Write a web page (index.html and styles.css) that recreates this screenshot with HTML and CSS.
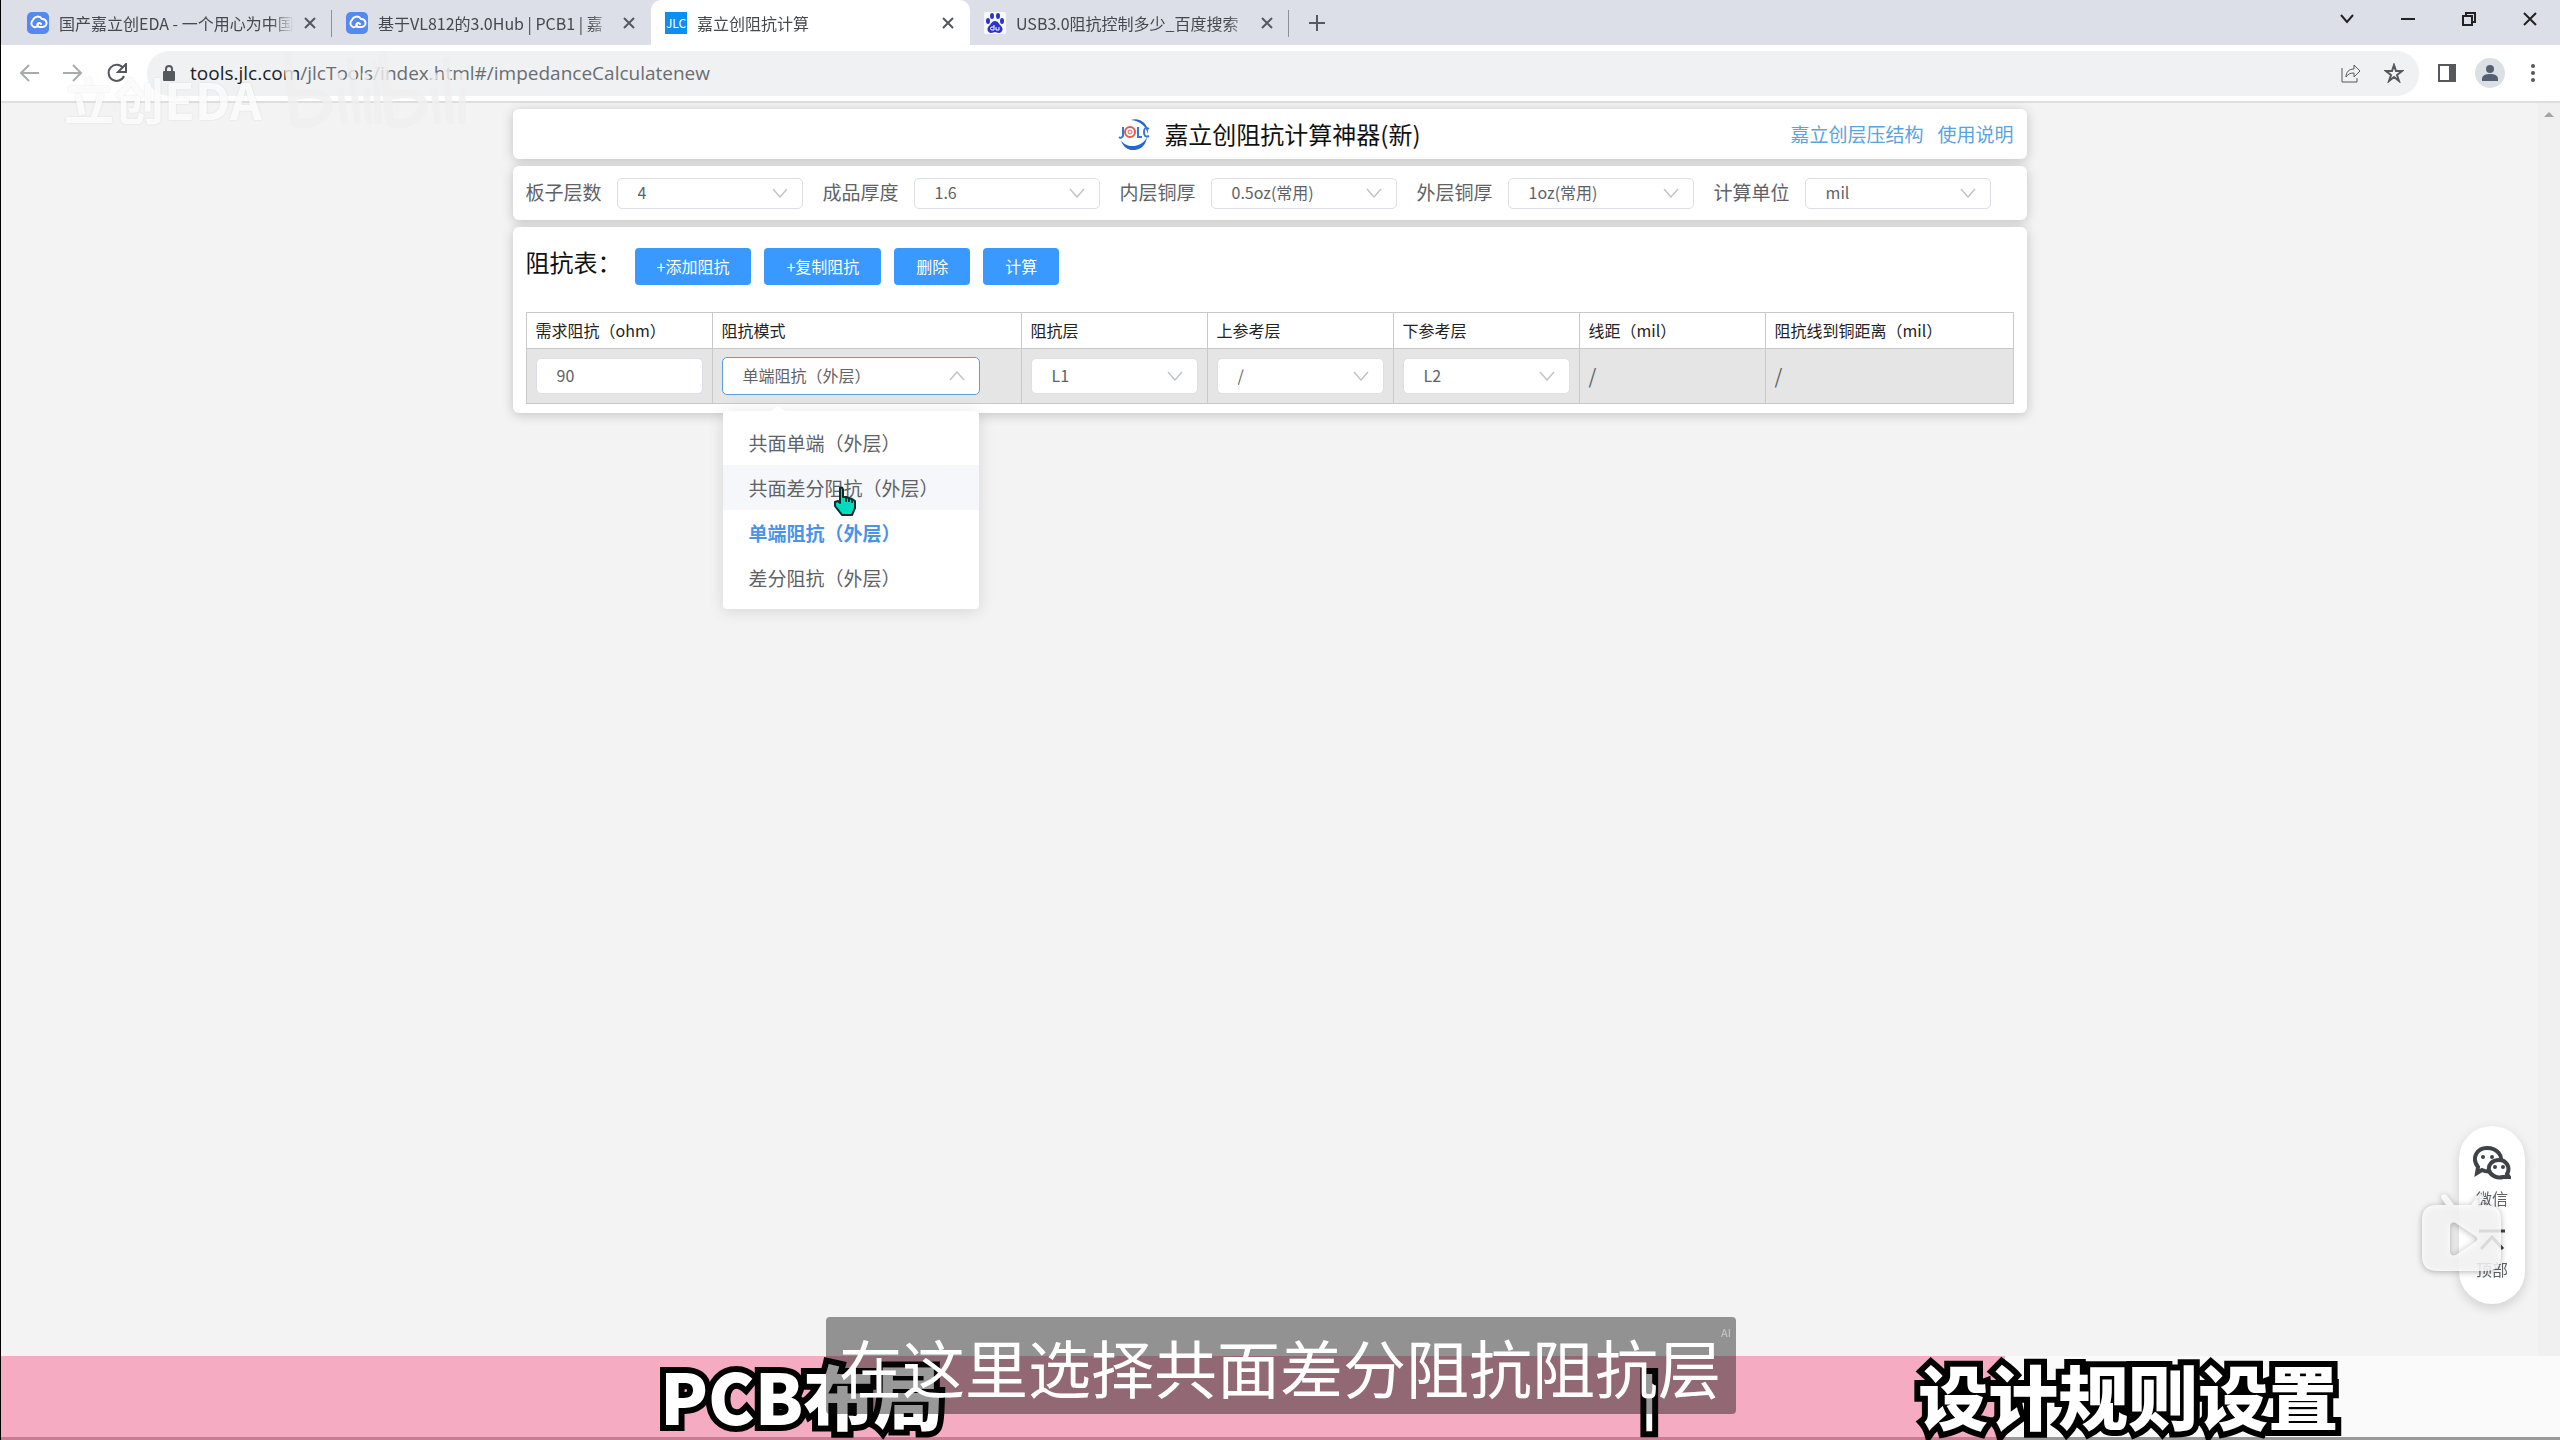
FILE: index.html
```html
<!doctype html>
<html lang="zh-CN">
  <head>
    <meta charset="UTF-8" />
    <meta
      name="viewport"
      content="width=device-width, initial-scale=1.0"
    />
    <title>嘉立创阻抗计算</title>
    <link rel="stylesheet" href="styles.css">
  </head>
  <body>
    <header class="browser">
      <div class="tab-strip">
        <div class="tab">
          <svg class="favicon" viewBox="0 0 22 22">
            <rect width="22" height="22" rx="5" fill="#5588f0" />
            <path d="M7 15a4 4 0 0 1-1-7 5 5 0 0 1 9-1 4 4 0 0 1 1 8h-4a2 2 0 1 1 2-3M7 15a3 3 0 0 0 4-3" fill="none" stroke="#fff" stroke-width="2" stroke-linecap="round" />
          </svg>
          <span class="tab-title">国产嘉立创EDA - 一个用心为中国</span>
          <button class="tab-close" aria-label="关闭标签页"><svg viewBox="0 0 12 12"><path d="M1 1l10 10M11 1L1 11" /></svg></button>
        </div>
        <div class="tab no-line">
          <svg class="favicon" viewBox="0 0 22 22">
            <rect width="22" height="22" rx="5" fill="#5588f0" />
            <path d="M7 15a4 4 0 0 1-1-7 5 5 0 0 1 9-1 4 4 0 0 1 1 8h-4a2 2 0 1 1 2-3M7 15a3 3 0 0 0 4-3" fill="none" stroke="#fff" stroke-width="2" stroke-linecap="round" />
          </svg>
          <span class="tab-title">基于VL812的3.0Hub | PCB1 | 嘉</span>
          <button class="tab-close" aria-label="关闭标签页"><svg viewBox="0 0 12 12"><path d="M1 1l10 10M11 1L1 11" /></svg></button>
        </div>
        <div class="tab no-line active">
          <span class="favicon jlc-icon">JLC</span>
          <span class="tab-title">嘉立创阻抗计算</span>
          <button class="tab-close" aria-label="关闭标签页"><svg viewBox="0 0 12 12"><path d="M1 1l10 10M11 1L1 11" /></svg></button>
        </div>
        <div class="tab">
          <svg class="favicon" viewBox="0 0 22 22">
            <rect width="22" height="22" rx="2" fill="#f7f9fd" />
            <g fill="#2a35c8">
              <ellipse cx="4" cy="9" rx="2" ry="3" />
              <ellipse cx="8" cy="4" rx="2" ry="3" />
              <ellipse cx="14" cy="4" rx="2" ry="3" />
              <ellipse cx="18" cy="9" rx="2" ry="3" />
              <path d="M11 9c3 0 4 3 6 5 3 3 1 7-2 7-2 0-3-1-4-1s-2 1-4 1c-3 0-5-4-2-7 2-2 3-5 6-5z" />
            </g>
            <path d="M10 13v5H8a1 1 0 0 1 0-3h2M12 15v3h3v-3" fill="none" stroke="#fff" />
          </svg>
          <span class="tab-title">USB3.0阻抗控制多少_百度搜索</span>
          <button class="tab-close" aria-label="关闭标签页"><svg viewBox="0 0 12 12"><path d="M1 1l10 10M11 1L1 11" /></svg></button>
        </div>
        <button class="new-tab" aria-label="新标签页"><svg viewBox="0 0 16 16"><path d="M8 0v16M0 8h16" /></svg></button>
        <div class="window-buttons">
          <button aria-label="搜索标签页"><svg viewBox="0 0 14 14"><path d="M1 3l6 7 6-7" /></svg></button>
          <button aria-label="最小化"><svg viewBox="0 0 14 14"><path d="M0 7h14" /></svg></button>
          <button aria-label="还原"><svg viewBox="0 0 14 14"><path d="M1 4h9v9H1zM4 4V1h9v9h-3" /></svg></button>
          <button aria-label="关闭"><svg viewBox="0 0 14 14"><path d="M1 1l12 12M13 1L1 13" /></svg></button>
        </div>
      </div>
      <div class="toolbar">
        <div class="nav-buttons">
          <button class="dim" aria-label="后退"><svg viewBox="0 0 20 20"><path d="M20 10H2M10 2l-8 8 8 8" /></svg></button>
          <button class="dim" aria-label="前进"><svg viewBox="0 0 20 20"><path d="M0 10h18M10 2l8 8-8 8" /></svg></button>
          <button aria-label="刷新"><svg viewBox="0 0 20 20"><path d="M16 5a8 8 0 1 0 1 8" /><path d="M19 1v8h-8z" fill="#55585c" stroke="none" /></svg></button>
        </div>
        <div class="address">
          <svg class="lock" viewBox="0 0 12 16"><rect y="6" width="12" height="10" rx="1" fill="#55585c" /><path d="M3 7V4a3 3 0 0 1 6 0v3" fill="none" stroke="#55585c" stroke-width="2" /></svg>
          <span class="url"><b>tools.jlc.com</b>/jlcTools/index.html#/impedanceCalculatenew</span>
          <button aria-label="分享"><svg viewBox="0 0 20 20"><path d="M1 5v14h15v-4M5 14c0-5 3-8 8-8V2l6 6-6 6v-4c-4 0-6 1-8 4z" /></svg></button>
          <button aria-label="收藏"><svg viewBox="0 0 20 20"><path d="M10 2l2 6h6l-5 4 2 6-5-4-5 4 2-6-5-4h6z" class="star" /></svg></button>
        </div>
        <div class="tool-buttons">
          <button aria-label="侧边栏"><svg viewBox="0 0 20 20"><path d="M2 2h16v16H2z" /><rect x="12" y="2" width="7" height="16" fill="#55585c" /></svg></button>
          <button class="profile" aria-label="用户"><svg viewBox="0 0 20 20"><circle cx="10" cy="6" r="4" /><path d="M2 18v-2c0-4 4-5 8-5s8 1 8 5v2z" /></svg></button>
          <button aria-label="更多"><svg viewBox="0 0 20 20"><g fill="#55585c" stroke="none"><circle cx="10" cy="3" r="2" /><circle cx="10" cy="10" r="2" /><circle cx="10" cy="17" r="2" /></g></svg></button>
        </div>
      </div>
    </header>

    <div class="viewport">
      <main class="page">
        <section class="card title-card">
          <div class="brand">
            <svg class="logo" viewBox="0 0 32 32">
              <path d="M13 2C22-1 31 6 30 16 28 8 22 3 13 2z" fill="#2468cf" />
              <path d="M3 22c5 9 21 8 26-3-1 10-9 14-16 13C8 31 4 27 3 22z" fill="#2468cf" />
              <path d="M5 9v9q-2 3-4 1M20 9v10h4M31 11q-5-3-5 3t5 4" fill="none" stroke="#3478d4" stroke-width="2" />
              <circle cx="12" cy="14" r="5" fill="none" stroke="#e25a50" stroke-width="2" />
              <circle cx="12" cy="14" r="2" fill="none" stroke="#e25a50" />
            </svg>
            <h1>嘉立创阻抗计算神器(新)</h1>
          </div>
          <nav class="links">
            <a href="#structure">嘉立创层压结构</a>
            <a href="#help">使用说明</a>
          </nav>
        </section>

        <section class="card params">
          <div class="field">
            <label for="layers">板子层数</label>
            <select id="layers"><option>4</option></select>
          </div>
          <div class="field">
            <label for="thickness">成品厚度</label>
            <select id="thickness"><option>1.6</option></select>
          </div>
          <div class="field">
            <label for="inner">内层铜厚</label>
            <select id="inner"><option>0.5oz(常用)</option></select>
          </div>
          <div class="field">
            <label for="outer">外层铜厚</label>
            <select id="outer"><option>1oz(常用)</option></select>
          </div>
          <div class="field">
            <label for="unit">计算单位</label>
            <select id="unit"><option>mil</option></select>
          </div>
        </section>

        <section class="card">
          <div class="actions">
            <h2>阻抗表：</h2>
            <button>+添加阻抗</button>
            <button>+复制阻抗</button>
            <button>删除</button>
            <button>计算</button>
          </div>
          <table class="impedance">
            <colgroup>
              <col class="col-m"><col class="col-mode"><col class="col-m"><col class="col-m"><col class="col-m"><col class="col-m"><col>
            </colgroup>
            <thead>
              <tr>
                <th>需求阻抗（ohm）</th>
                <th>阻抗模式</th>
                <th>阻抗层</th>
                <th>上参考层</th>
                <th>下参考层</th>
                <th>线距（mil）</th>
                <th>阻抗线到铜距离（mil）</th>
              </tr>
            </thead>
            <tbody>
              <tr>
                <td><input type="text" value="90" aria-label="需求阻抗"></td>
                <td>
                  <div class="mode">
                    <select class="open" aria-label="阻抗模式"><option>单端阻抗（外层）</option></select>
                    <ul class="dropdown">
                      <li>共面单端（外层）</li>
                      <li class="hover">共面差分阻抗（外层）
                        <svg class="cursor" viewBox="0 0 24 30"><path d="M7 2c2-1 3 0 3 2v7l3 0 3 1 3 1 3 2v7l-3 7H9L2 20v-4l3-1 2 2z" fill="#00dcc0" stroke="#08302c" stroke-width="2" stroke-linejoin="round" /><path d="M13 11v5M16 12v4M19 13v4" stroke="#08302c" stroke-width="2" /></svg>
                      </li>
                      <li class="selected">单端阻抗（外层）</li>
                      <li>差分阻抗（外层）</li>
                    </ul>
                  </div>
                </td>
                <td><select aria-label="阻抗层"><option>L1</option></select></td>
                <td><select aria-label="上参考层"><option>/</option></select></td>
                <td><select aria-label="下参考层"><option>L2</option></select></td>
                <td>/</td>
                <td>/</td>
              </tr>
            </tbody>
          </table>
        </section>
      </main>
      <div class="scrollbar">
        <svg viewBox="0 0 10 5"><path d="M0 5l5-5 5 5z" fill="#a3a3a3" /></svg>
      </div>
    </div>

    <aside class="float-menu">
      <button>
        <svg class="wechat" viewBox="0 0 38 34">
          <g fill="#fff" stroke="#3f4347" stroke-width="4">
            <path d="M4 27l1-6C-2 12 4 2 14 2s17 8 13 16-12 9-18 6z" />
            <path d="M36 31l-2-3c4-7-1-14-8-14s-11 5-10 10 8 9 14 7z" />
          </g>
          <g fill="#3f4347"><circle cx="10" cy="11" r="2" /><circle cx="19" cy="11" r="2" /><circle cx="22" cy="21" r="2" /><circle cx="30" cy="21" r="2" /></g>
        </svg>
        微信
      </button>
      <button>
        <svg class="to-top" viewBox="0 0 26 22"><path d="M0 2h26M2 20L13 8l11 12" fill="none" stroke="#3f4347" stroke-width="3" /></svg>
        顶部
      </button>
    </aside>

    <!-- player layers -->
    <svg class="tv" viewBox="0 0 84 80">
      <path d="M22 3c2-2 5 0 7 3l5 7h17l5-7c2-3 5-5 7-3s1 4-4 10h7c10 0 15 5 15 15v36c0 10-5 15-15 15H17C7 79 2 74 2 64V28c0-10 5-15 15-15h9C21 6 20 5 22 3zM30 35v24c0 4 3 6 7 3l18-12c3-2 3-4 0-6L37 32c-4-3-7-1-7 3z" fill="#fff" fill-opacity="0.82" fill-rule="evenodd" />
    </svg>

    <div class="watermark">
      <span>立创EDA</span>
      <svg class="bili" viewBox="0 0 186 84">
        <g fill="none" stroke="#efefef" stroke-opacity="0.8" stroke-width="9">
          <path d="M5 4l8 70c18 6 36-8 33-20-4-10-22-9-35-6M100 4l8 70c18 6 36-8 33-20-4-10-22-9-35-6" />
          <path d="M58 40l5 36M68 10l8 66M84 40l3 36M94 14l2 62M152 40l4 36M164 10l4 66M180 40v36M57 25l1 7M83 25l1 7M151 25l1 7M179 25v7" stroke-width="7" />
        </g>
      </svg>
    </div>

    <footer class="chapters">
      <div class="progress"></div>
      <span>PCB布局</span>
      <span class="divider">|</span>
      <span>设计规则设置</span>
    </footer>

    <div class="subtitle">
      <p>在这里选择共面差分阻抗阻抗层</p>
      <small>AI</small>
    </div>
  </body>
</html>
```

FILE: styles.css
```css
:root {
  --primary-color: #3a99ff;
  --link-color: #5ba3e0;
  --text-color: #606266;
  --border-color: #dcdfe6;
  --line-color: #c9c9c9;
  --icon-color: #55585c;
  --pink: #f5abc2;
}

* {
  margin: 0;
  padding: 0;
  box-sizing: border-box;
}

body {
  font-family: 'Noto Sans CJK SC', 'Noto Sans', sans-serif;
  font-size: 16px;
  color: var(--text-color);
  background-color: #f3f3f3;
  border-left: 1px solid #000;
  min-height: 100vh;
  display: flex;
  flex-direction: column;
  overflow: hidden;
}

button {
  font: inherit;
  color: inherit;
  background: none;
  border: none;
  cursor: pointer;
}

/* browser chrome */
.browser svg {
  display: block;
}

.browser button path {
  fill: none;
  stroke: var(--icon-color);
  stroke-width: 2;
}

.tab-strip {
  display: flex;
  height: 45px;
  padding-left: 12px;
  background: #dcdfe7;
}

.tab {
  position: relative;
  flex: 0 1 319px;
  min-width: 0;
  display: flex;
  align-items: center;
  padding: 0 12px 0 14px;
  color: #45484d;
}

.tab::after {
  content: '';
  position: absolute;
  right: 0;
  top: 10px;
  height: 27px;
  border-right: 1px solid #8d9096;
}

.tab.no-line::after {
  display: none;
}

.tab.active {
  background: #fff;
  border-radius: 10px 10px 0 0;
}

.favicon {
  flex: none;
  width: 22px;
  height: 22px;
  margin-right: 10px;
}

.jlc-icon {
  background: #0d8ff2;
  color: #fff;
  font-size: 12px;
  line-height: 22px;
  text-align: center;
}

.tab-title {
  flex: 1;
  overflow: hidden;
  line-height: 24px;
  white-space: nowrap;
  margin-right: 6px;
  -webkit-mask-image: linear-gradient(to right, #000 90%, transparent);
  mask-image: linear-gradient(to right, #000 90%, transparent);
}

.tab-close {
  flex: none;
  width: 20px;
  padding: 4px;
}

.new-tab {
  width: 56px;
  padding: 0 20px;
}

.window-buttons {
  display: flex;
  margin-left: auto;
}

.window-buttons button {
  width: 61px;
  padding: 0 23px 8px 24px;
}

.browser .window-buttons path {
  stroke: #222;
}

.toolbar {
  display: flex;
  align-items: center;
  height: 58px;
  padding: 0 17px 0 18px;
  background: #fff;
  border-bottom: 2px solid #dedede;
}

.nav-buttons {
  display: flex;
  gap: 24px;
  margin-right: 20px;
}

.nav-buttons button {
  width: 20px;
}

.dim {
  opacity: 0.5;
}

.address {
  flex: 1;
  display: flex;
  align-items: center;
  height: 45px;
  padding: 0 15px 0 16px;
  border-radius: 22px;
  background: #eff1f3;
}

.address button {
  width: 20px;
  margin-left: 23px;
}

.browser .address button path {
  stroke-width: 1;
}

.browser .address button .star {
  stroke-width: 2;
}

.lock {
  width: 12px;
  margin-right: 15px;
}

.url {
  flex: 1;
  font-family: 'Open Sans', 'Noto Sans', sans-serif;
  font-size: 19px;
  color: #6a6d71;
}

.url b {
  font-weight: 400;
  color: #202124;
}

.tool-buttons {
  display: flex;
  align-items: center;
  gap: 18px;
  margin-left: 18px;
}

.tool-buttons button {
  width: 20px;
}

.tool-buttons .profile {
  width: 30px;
  height: 30px;
  padding: 5px;
  border-radius: 50%;
  background: #dbe0e5;
}

.browser .profile path,
.profile circle {
  fill: #566072;
  stroke: none;
}

/* calculator page */
.viewport {
  flex: 1;
  display: flex;
}

.page {
  flex: 1;
  width: 100%;
  max-width: 1514px;
  margin: 0 auto;
  padding-top: 6px;
  display: flex;
  flex-direction: column;
  gap: 7px;
}

.scrollbar {
  width: 22px;
  padding: 9px 6px;
  background: #f0f0f0;
}

.scrollbar svg {
  display: block;
}

.card {
  background: #fff;
  border-radius: 6px;
  padding: 0 13px;
  box-shadow: 0 2px 12px rgba(0, 0, 0, 0.2);
}

.title-card {
  display: grid;
  grid-template-columns: 1fr auto 1fr;
  align-items: center;
  height: 50px;
}

.brand {
  grid-column: 2;
  display: flex;
  align-items: center;
  gap: 14px;
}

.logo {
  width: 32px;
  height: 32px;
}

h1,
h2 {
  font-size: 24px;
  font-weight: 400;
  line-height: 28px;
  color: #111;
}

.links {
  display: flex;
  justify-content: flex-end;
  gap: 14px;
}

.links a {
  font-size: 19px;
  line-height: 24px;
  color: var(--link-color);
  text-decoration: none;
}

.params {
  display: flex;
  align-items: center;
  gap: 20px;
  height: 54px;
}

.field {
  display: flex;
  align-items: center;
  gap: 15px;
}

.field label {
  font-size: 19px;
  line-height: 24px;
  padding-bottom: 2px;
  white-space: nowrap;
}

select,
input {
  width: 100%;
  height: 36px;
  padding: 0 20px 2px;
  font: inherit;
  color: var(--text-color);
  background-color: #fff;
  border: 1px solid var(--border-color);
  border-radius: 5px;
  outline: none;
}

select {
  appearance: none;
  background-image: url("data:image/svg+xml,%3Csvg xmlns='http://www.w3.org/2000/svg' viewBox='0 0 16 10'%3E%3Cpath d='M1 1l7 8 7-8' fill='none' stroke='%23c0c4cc' stroke-width='1.5'/%3E%3C/svg%3E");
  background-repeat: no-repeat;
  background-position: right 14px center;
  background-size: 16px 10px;
}

.field select {
  width: 186px;
  height: 31px;
}

select.open {
  height: 38px;
  border-color: #5b9fdd;
  background-image: url("data:image/svg+xml,%3Csvg xmlns='http://www.w3.org/2000/svg' viewBox='0 0 16 10'%3E%3Cpath d='M1 9l7-8 7 8' fill='none' stroke='%23c0c4cc' stroke-width='1.5'/%3E%3C/svg%3E");
}

.actions {
  display: flex;
  align-items: flex-start;
  gap: 13px;
  padding: 21px 0 27px;
}

.actions h2 {
  width: 96px;
  white-space: nowrap;
}

.actions button {
  height: 37px;
  padding: 0 22px 2px;
  color: #fff;
  background: var(--primary-color);
  border-radius: 4px;
}

.impedance {
  width: 100%;
  table-layout: fixed;
  border-collapse: collapse;
}

.col-m {
  width: 186px;
}

.col-mode {
  width: 309px;
}

.impedance th,
.impedance td {
  border: 1px solid var(--line-color);
  text-align: left;
  padding: 0 9px;
}

.impedance th {
  height: 36px;
  padding-bottom: 2px;
  font-weight: 400;
  color: #222;
}

.impedance td {
  height: 55px;
  font-size: 20px;
  line-height: 24px;
  background: #e5e5e5;
}

.impedance select,
.impedance input {
  font-size: 16px;
}

.card:last-child {
  padding-bottom: 9px;
}

.mode {
  position: relative;
  width: 258px;
}

.mode select {
  display: block;
}

.dropdown {
  position: absolute;
  top: 54px;
  left: 1px;
  z-index: 2;
  width: 256px;
  padding: 9px 0;
  list-style: none;
  font-size: 19px;
  line-height: 45px;
  background: #fff;
  border-radius: 4px;
  box-shadow: 0 2px 16px rgba(0, 0, 0, 0.12);
}

.dropdown::before {
  content: '';
  position: absolute;
  top: -5px;
  left: 48px;
  border: 7px solid transparent;
  border-top: none;
  border-bottom: 5px solid #fff;
}

.dropdown li {
  position: relative;
  padding-left: 26px;
}

.dropdown .hover {
  background: #f5f7fa;
}

.dropdown .selected {
  color: #4a94e6;
  font-weight: 700;
}

.cursor {
  position: absolute;
  left: 110px;
  top: 21px;
  width: 24px;
}

/* floating contact menu */
.float-menu {
  position: fixed;
  right: 35px;
  bottom: 136px;
  width: 66px;
  display: flex;
  flex-direction: column;
  gap: 18px;
  padding: 20px 0 22px;
  background: #fff;
  border-radius: 33px;
  box-shadow: 0 4px 12px rgba(0, 0, 0, 0.15);
}

.float-menu button {
  display: flex;
  flex-direction: column;
  align-items: center;
  gap: 6px;
  line-height: 25px;
}

.wechat {
  width: 38px;
}

.to-top {
  width: 26px;
}

.tv {
  position: fixed;
  right: 56px;
  bottom: 168px;
  width: 84px;
  filter: drop-shadow(0 1px 3px rgba(0, 0, 0, 0.35));
}

.watermark {
  position: fixed;
  top: 48px;
  left: 64px;
  display: flex;
  gap: 20px;
  pointer-events: none;
}

.watermark span {
  font-size: 50px;
  font-weight: 700;
  line-height: 100px;
  color: rgba(255, 255, 255, 0.85);
  text-shadow: 0 0 2px rgba(0, 0, 0, 0.12);
}

.bili {
  width: 186px;
  height: 84px;
}

/* chapter bar and subtitle */
.chapters {
  position: fixed;
  left: 1px;
  right: 0;
  bottom: 0;
  height: 84px;
  display: grid;
  grid-template-columns: 1602fr 94fr 864fr;
  align-items: start;
  justify-items: center;
  background: #fafafa;
  border-bottom: 3px solid #999;
}

.progress {
  position: absolute;
  top: 0;
  left: 0;
  bottom: -3px;
  width: 78.3%;
  background: var(--pink);
  border-bottom: 3px solid #c97c93;
}

.chapters span {
  position: relative;
  font-size: 70px;
  font-weight: 900;
  line-height: 78px;
  color: #fff;
  -webkit-text-stroke: 12px #000;
  paint-order: stroke fill;
  white-space: nowrap;
}

.chapters .divider {
  font-size: 50px;
}

.subtitle {
  position: fixed;
  left: 826px;
  bottom: 26px;
  display: flex;
  padding: 4px 5px 0 13px;
  height: 97px;
  color: #fff;
  background: rgba(12, 12, 12, 0.42);
  border-radius: 4px;
}

.subtitle p {
  font-size: 63px;
  line-height: 90px;
}

.subtitle small {
  font-size: 11px;
  line-height: 22px;
  opacity: 0.5;
}
```
